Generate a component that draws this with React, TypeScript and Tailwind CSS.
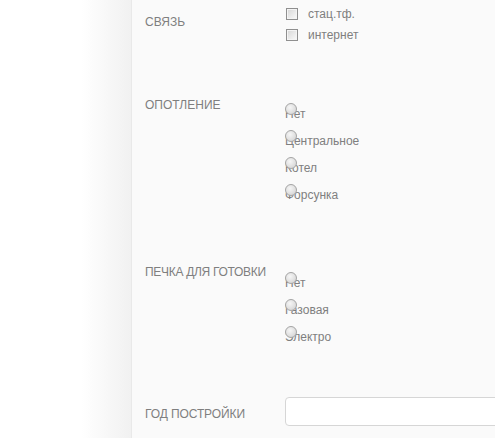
import React from 'react';

function Checkbox({ label }: { label: string }) {
  return (
    <div className="flex h-[21px] items-center">
      <span className="ml-px box-border block h-[12px] w-[12px] border border-[#8f8f8f] bg-gradient-to-br from-[#d6d6d6] to-[#fbfbfb] shadow-[inset_0_0_0_1px_#f4f4f4]" />
      <span className="ml-[10px] pt-px">{label}</span>
    </div>
  );
}

function Radio({ label }: { label: string }) {
  return (
    <div className="relative h-[27px]">
      <span className="absolute left-0 top-0 block h-[12px] w-[12px] rounded-full border border-[#a4a4a4] bg-[radial-gradient(circle_at_40%_35%,#f6f6f6,#cfcfcf)]" />
      <div className="pt-[4px] leading-[14px]">{label}</div>
    </div>
  );
}

export default function App() {
  const heating = ['Нет', 'Центральное', 'Котел', 'Форсунка'];
  const stove = ['Нет', 'Газовая', 'Электро'];

  return (
    <div className="flex h-[438px] w-[495px] overflow-hidden bg-white font-['Liberation_Sans',Arial,sans-serif] text-[12px] text-[#7f7f7f]">
      <div className="w-[131px] shrink-0 bg-gradient-to-r from-white from-[62%] to-[#f1f1f1]" />
      <div className="w-px shrink-0 bg-[#e9e9e9]" />
      <div className="flex-1 bg-[#fafafa] pl-[13px]">
        {/* связь */}
        <div className="flex h-[90px]">
          <div className="mt-[15px] w-[140px] shrink-0 leading-[14px]">СВЯЗЬ</div>
          <div className="mt-[3px] leading-[14px]">
            <Checkbox label="стац.тф." />
            <Checkbox label="интернет" />
          </div>
        </div>

        {/* отопление */}
        <div className="flex h-[167px]">
          <div className="mt-[8px] w-[140px] shrink-0 leading-[14px]">ОПОТЛЕНИЕ</div>
          <div className="mt-[13px]">
            {heating.map((h) => (
              <Radio key={h} label={h} />
            ))}
          </div>
        </div>

        {/* печка */}
        <div className="flex h-[133px]">
          <div className="mt-[8px] w-[140px] shrink-0 leading-[14px] tracking-[-0.3px]">ПЕЧКА ДЛЯ ГОТОВКИ</div>
          <div className="mt-[15px]">
            {stove.map((s) => (
              <Radio key={s} label={s} />
            ))}
          </div>
        </div>

        {/* год */}
        <div className="flex">
          <div className="mt-[17px] w-[140px] shrink-0 leading-[14px] tracking-[-0.1px]">ГОД ПОСТРОЙКИ</div>
          <input
            type="text"
            className="mt-[7px] h-[29px] w-[240px] rounded-[4px] border border-[#d6d6d6] bg-white outline-none"
          />
        </div>
      </div>
    </div>
  );
}
